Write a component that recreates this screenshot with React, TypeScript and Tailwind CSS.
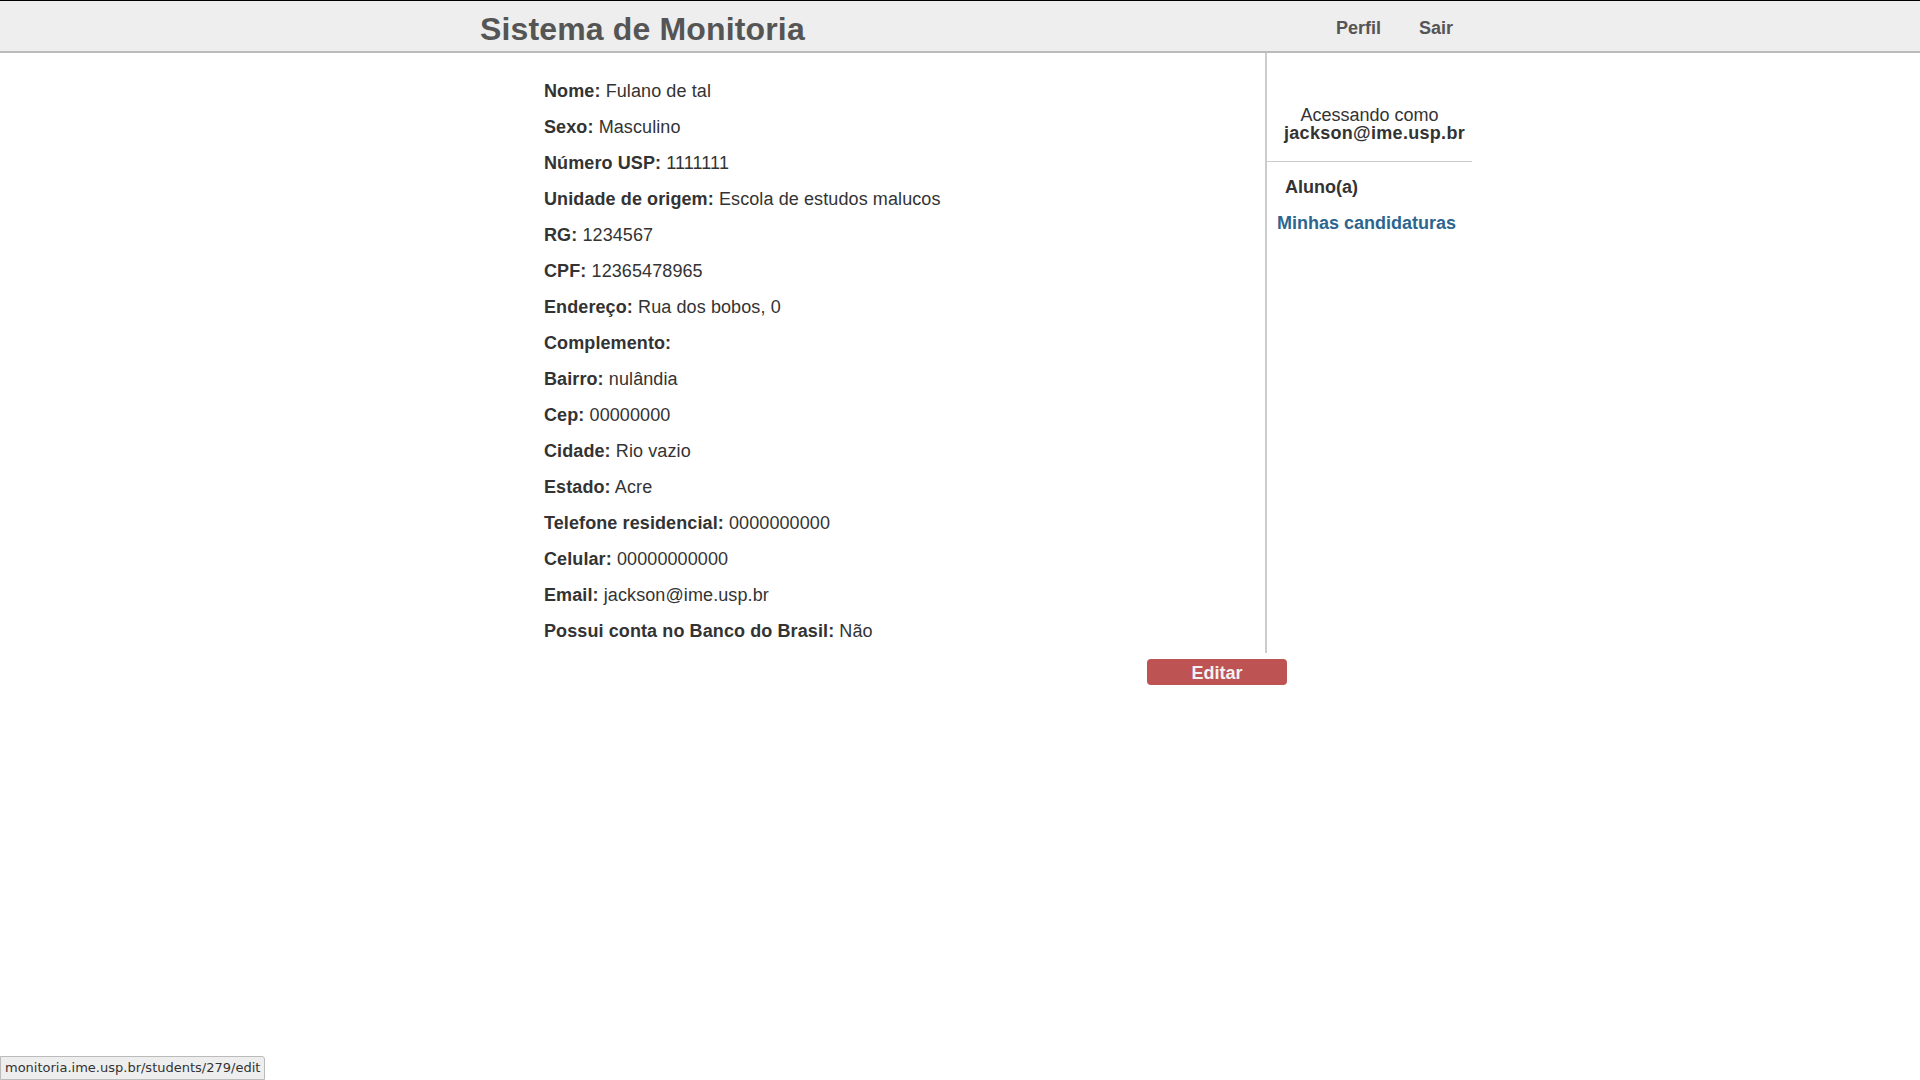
const campos: [string, string][] = [
  ['Nome:', 'Fulano de tal'],
  ['Sexo:', 'Masculino'],
  ['Número USP:', '1111111'],
  ['Unidade de origem:', 'Escola de estudos malucos'],
  ['RG:', '1234567'],
  ['CPF:', '12365478965'],
  ['Endereço:', 'Rua dos bobos, 0'],
  ['Complemento:', ''],
  ['Bairro:', 'nulândia'],
  ['Cep:', '00000000'],
  ['Cidade:', 'Rio vazio'],
  ['Estado:', 'Acre'],
  ['Telefone residencial:', '0000000000'],
  ['Celular:', '00000000000'],
  ['Email:', 'jackson@ime.usp.br'],
  ['Possui conta no Banco do Brasil:', 'Não'],
];

export default function App() {
  return (
    <div className="min-h-screen bg-white font-['Liberation_Sans',Arial,sans-serif] text-[#333]">
      {/* Cabeçalho */}
      <header className="h-[53px] bg-[#eeeeee] border-t border-t-black border-b-2 border-b-[#bbbbbb]">
        <div className="ml-[480px] w-[992px] h-full pt-[5px] flex items-center">
          <h1 className="text-[32px] font-bold text-[#555] leading-none tracking-[0.15px]">Sistema de Monitoria</h1>
          <nav className="ml-auto mr-[19px] flex items-center gap-[38px] text-[18px] font-bold text-[#555]">
            <a href="#">Perfil</a>
            <a href="#">Sair</a>
          </nav>
        </div>
      </header>

      <div className="ml-[480px] w-[992px]">
        <div className="flex">
          {/* Dados do aluno */}
          <main className="w-[785px] pl-[64px] pt-[20px] pb-[4px] tracking-[0.1px]">
            {campos.map(([rotulo, valor]) => (
              <p key={rotulo} className="text-[18px] leading-[36px]">
                <b>{rotulo}</b> {valor}
              </p>
            ))}
          </main>

          {/* Barra lateral */}
          <aside className="w-[207px] border-l-2 border-[#cccccc]">
            <div className="pt-[53px] pb-[19px] border-b border-[#cccccc] text-center text-[18px] leading-[18px]">
              <div>Acessando como</div>
              <div className="font-bold pl-[10px] tracking-[0.3px]">jackson@ime.usp.br</div>
            </div>
            <div className="pl-[18px] pt-[15px] text-[18px] font-bold leading-[21px]">Aluno(a)</div>
            <a href="#" className="block pl-[10px] pt-[15px] text-[18px] font-bold leading-[21px] text-[#2c6690]">
              Minhas candidaturas
            </a>
          </aside>
        </div>

        <div className="pt-[6px] pl-[667px]">
          <button className="w-[140px] h-[26px] rounded-[4px] bg-[#bd5353] text-[#f2f2f2] text-[18px] font-bold leading-[28px]">
            Editar
          </button>
        </div>
      </div>

      {/* Barra de status do navegador */}
      <div className="fixed left-0 bottom-0 h-[24px] px-[4px] flex items-center bg-[#eeeeee] border border-[#bbbbbb] rounded-tr-[3px] text-[13px] text-[#333] font-['DejaVu_Sans',sans-serif]">
        monitoria.ime.usp.br/students/279/edit
      </div>
    </div>
  );
}
